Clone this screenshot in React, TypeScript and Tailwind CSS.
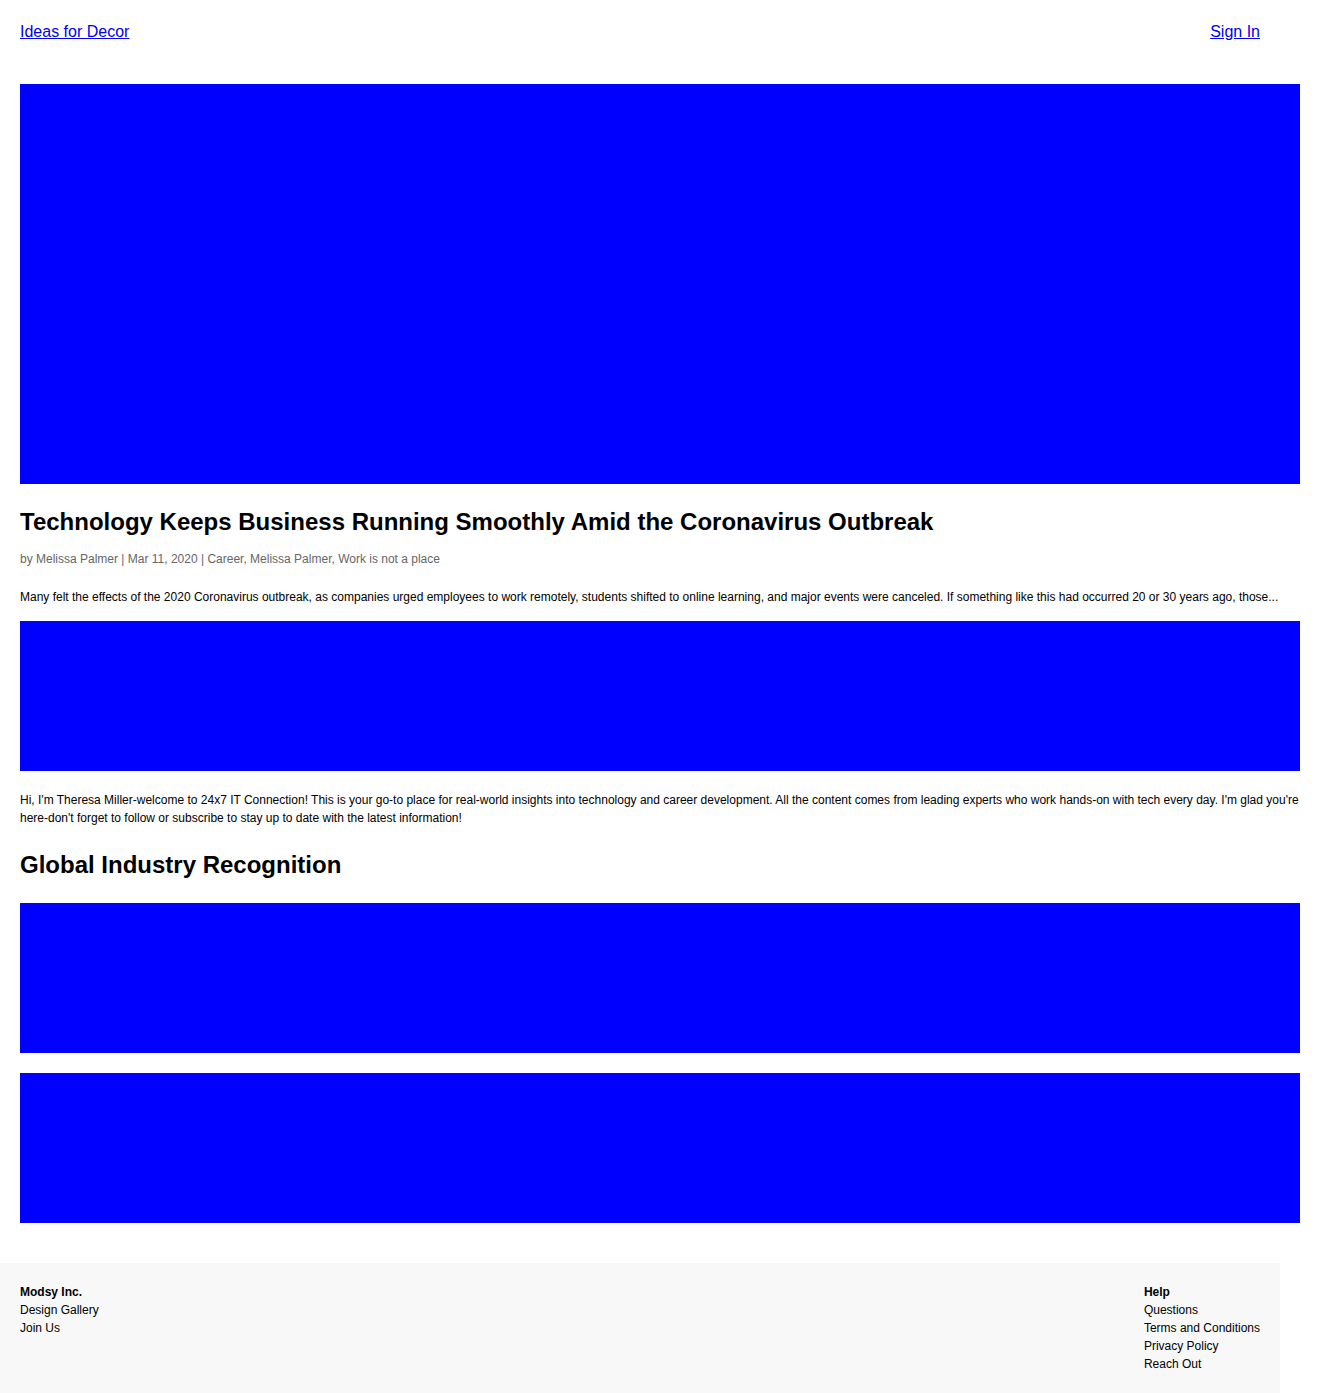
export default function App() {
  const font = { fontFamily: '"Liberation Sans", Arial, sans-serif' };
  return (
    <div className="bg-white text-black w-[1320px]" style={font}>
      <header className="w-[1280px] flex justify-between items-center px-5 py-5 text-base leading-6">
        <a href="#" className="text-[#0000ee] underline">Ideas for Decor</a>
        <a href="#" className="text-[#0000ee] underline">Sign In</a>
      </header>
      <main className="px-5 pt-5 pb-10">
        <div className="h-[400px] bg-[#0000ff]" />
        <h1 className="mt-6 text-2xl font-bold leading-[normal]">
          Technology Keeps Business Running Smoothly Amid the Coronavirus Outbreak
        </h1>
        <p className="mt-[14px] text-xs leading-[18px] text-[#666666]">
          by Melissa Palmer | Mar 11, 2020 | Career, Melissa Palmer, Work is not a place
        </p>
        <p className="mt-5 text-xs leading-[18px]">
          Many felt the effects of the 2020 Coronavirus outbreak, as companies urged employees to work remotely, students shifted to online learning, and major events were canceled. If something like this had occurred 20 or 30 years ago, those...
        </p>
        <div className="mt-[15px] h-[150px] bg-[#0000ff]" />
        <p className="mt-5 text-xs leading-[18px]">
          Hi, I'm Theresa Miller-welcome to 24x7 IT Connection! This is your go-to place for real-world insights into technology and career development. All the content comes from leading experts who work hands-on with tech every day. I'm glad you're here-don't forget to follow or subscribe to stay up to date with the latest information!
        </p>
        <h2 className="mt-6 mb-6 text-2xl font-bold leading-[normal]">Global Industry Recognition</h2>
        <div className="flex flex-col gap-5">
          <div className="h-[150px] bg-[#0000ff]" />
          <div className="h-[150px] bg-[#0000ff]" />
        </div>
      </main>
      <footer className="w-[1280px] bg-[#f8f8f8] p-5 flex justify-between text-xs leading-[18px]">
        <div className="flex flex-col">
          <span className="font-bold">Modsy Inc.</span>
          <a href="#">Design Gallery</a>
          <a href="#">Join Us</a>
        </div>
        <div className="flex flex-col">
          <span className="font-bold">Help</span>
          <a href="#">Questions</a>
          <a href="#">Terms and Conditions</a>
          <a href="#">Privacy Policy</a>
          <a href="#">Reach Out</a>
        </div>
      </footer>
    </div>
  );
}
